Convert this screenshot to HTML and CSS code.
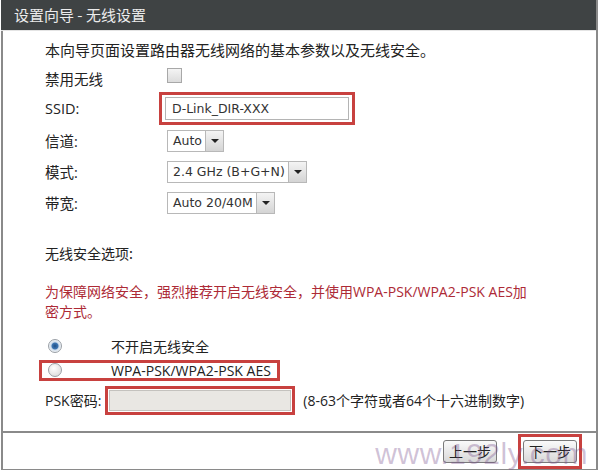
FILE: index.html
```html
<!DOCTYPE html>
<html lang="zh-CN">
<head>
    <meta charset="UTF-8">
    <title>设置向导 - 无线设置</title>
    <link rel="stylesheet" href="styles.css">
</head>
<body>

    <div class="wizard">
        <div class="wizard-title">设置向导 - 无线设置</div>

        <div class="wizard-body">
            <p class="intro">本向导页面设置路由器无线网络的基本参数以及无线安全。</p>

            <div class="form-grid">
                <div class="row row-check">
                    <span class="label">禁用无线</span>
                    <span class="checkbox"></span>
                </div>
                <div class="row row-ssid">
                    <span class="label">SSID:</span>
                    <span class="mark mark-ssid"><span class="text-input">D-Link_DIR-XXX</span></span>
                </div>
                <div class="row">
                    <span class="label">信道:</span>
                    <span class="select"><span class="select-value">Auto</span><span class="select-arrow"></span></span>
                </div>
                <div class="row">
                    <span class="label">模式:</span>
                    <span class="select"><span class="select-value">2.4 GHz (B+G+N)</span><span class="select-arrow"></span></span>
                </div>
                <div class="row">
                    <span class="label">带宽:</span>
                    <span class="select"><span class="select-value">Auto 20/40M</span><span class="select-arrow"></span></span>
                </div>
            </div>

            <p class="section-title">无线安全选项:</p>
            <p class="warning">为保障网络安全，强烈推荐开启无线安全，并使用WPA-PSK/WPA2-PSK AES加密方式。</p>

            <div class="radio-row">
                <span class="radio checked"></span>
                <span>不开启无线安全</span>
            </div>
            <div class="radio-row">
                <span class="mark mark-radio">
                    <span class="radio"></span>
                    <span>WPA-PSK/WPA2-PSK AES</span>
                </span>
            </div>
            <div class="psk-row">
                <span class="psk-label">PSK密码:</span>
                <span class="mark mark-psk"><span class="text-input disabled"></span></span>
                <span class="hint">(8-63个字符或者64个十六进制数字)</span>
            </div>
        </div>

        <div class="wizard-footer">
            <button type="button" class="btn">上一步</button>
            <span class="mark mark-btn"><button type="button" class="btn">下一步</button></span>
            <span class="watermark">www.192ly.com</span>
        </div>
    </div>

</body>
</html>
```

FILE: styles.css
```css
body {
    margin: 0;
    background-color: #fff;
    font-family: "DejaVu Sans", "Noto Sans CJK SC", sans-serif;
    color: #222;
}

.wizard {
    width: 593px;
    margin-left: 1px;
    border-left: 2px solid #8a8a8a;
    border-right: 2px solid #8a8a8a;
    border-bottom: 2px solid #8a8a8a;
    position: relative;
}

.wizard-title {
    height: 30px;
    line-height: 30px;
    margin-left: -2px;
    padding-left: 13px;
    background-color: #3f4344;
    color: #ececec;
    font-family: "Noto Sans CJK SC", sans-serif;
    font-size: 15px;
    border-bottom: 1px solid #e4e4e4;
}

.wizard-body {
    padding: 8px 0 16px 42px;
    font-size: 14px;
}

.intro {
    margin: 0;
    line-height: 22px;
    font-family: "Noto Sans CJK SC", sans-serif;
    font-size: 15px;
}

.form-grid {
    margin-top: 3px;
}

.row {
    display: flex;
    align-items: center;
    height: 31px;
}

.row-check {
    height: 28px;
}

.row-ssid {
    height: 33px;
}

.label {
    width: 122px;
    font-family: "Open Sans", "Noto Sans CJK SC", sans-serif;
    font-size: 14.5px;
}

.checkbox {
    width: 13px;
    height: 13px;
    margin-top: -6px;
    border: 1px solid #a8a8a8;
    background: linear-gradient(#f4f4f4, #dcdcdc);
}

.mark {
    display: inline-flex;
    align-items: center;
    border: 3px solid #c8413f;
}

.mark-ssid {
    margin-left: -8px;
    padding: 2px 3px;
}

.text-input {
    display: inline-block;
    box-sizing: border-box;
    width: 184px;
    height: 23px;
    line-height: 21px;
    padding-left: 6px;
    border: 1px solid #b4b4b4;
    background-color: #fff;
    font-size: 12.5px;
    color: #333;
}

.select {
    display: inline-flex;
    height: 20px;
    border: 1px solid #b8b8b8;
    background-color: #fff;
    font-size: 12.5px;
    color: #333;
}

.select-value {
    line-height: 20px;
    padding: 0 3px 0 5px;
}

.select-arrow {
    position: relative;
    width: 17px;
    border-left: 1px solid #b8b8b8;
    background: linear-gradient(#f4f4f4, #d4d4d4);
}

.select-arrow::after {
    content: "";
    position: absolute;
    left: 5px;
    top: 8px;
    border-left: 4px solid transparent;
    border-right: 4px solid transparent;
    border-top: 4px solid #222;
}

.section-title {
    margin: 24px 0 0;
    line-height: 22px;
    font-family: "Noto Sans CJK SC", sans-serif;
    font-size: 14px;
}

.warning {
    width: 490px;
    margin: 18px 0 0;
    line-height: 20px;
    color: #ad2a36;
    font-family: "Open Sans", "Noto Sans CJK SC", sans-serif;
    font-size: 14px;
}

.radio-row {
    display: flex;
    align-items: center;
    height: 24px;
    font-family: "Open Sans", "Noto Sans CJK SC", sans-serif;
    font-size: 14px;
}

.warning + .radio-row {
    margin-top: 12px;
}

.radio {
    width: 12px;
    height: 12px;
    margin-left: 3px;
    margin-right: 49px;
    border: 1px solid #9aa0a6;
    border-radius: 50%;
    background: radial-gradient(circle at 40% 35%, #ffffff, #d6d6d6);
}

.radio.checked {
    background: radial-gradient(circle, #1f4f86 0, #3f77b3 3px, #cfdcea 4px, #eef2f6 6px);
}

.mark-radio {
    margin-left: -6px;
    padding: 0 6px 0 3px;
    height: 15px;
}

.psk-row {
    display: flex;
    align-items: center;
    margin-top: 3px;
    height: 30px;
    font-family: "Open Sans", "Noto Sans CJK SC", sans-serif;
    font-size: 14px;
}

.psk-label {
    margin-right: 4px;
}

.mark-psk {
    padding: 1px;
}

.mark-psk .text-input {
    width: 182px;
    height: 21px;
    background-color: #e9e7e3;
    border-color: #c4c2be;
}

.hint {
    margin-left: 8px;
}

.wizard-footer {
    display: flex;
    align-items: center;
    justify-content: flex-end;
    gap: 21px;
    height: 36px;
    padding-right: 14px;
    border-top: 2px solid #8a8a8a;
}

.btn {
    height: 23px;
    padding: 0 5px;
    border: 1px solid #7a7a7a;
    border-radius: 3px;
    background: linear-gradient(#fafafa, #d8d8d8);
    font-family: "Noto Sans CJK SC", sans-serif;
    font-size: 14px;
    color: #222;
}

.mark-btn {
    padding: 3px 2px;
}

.watermark {
    position: absolute;
    right: 8px;
    bottom: -1px;
    line-height: 32px;
    font-family: "Liberation Sans", sans-serif;
    font-size: 30px;
    color: rgba(120, 80, 140, 0.35);
    letter-spacing: 0.5px;
    pointer-events: none;
}
```
